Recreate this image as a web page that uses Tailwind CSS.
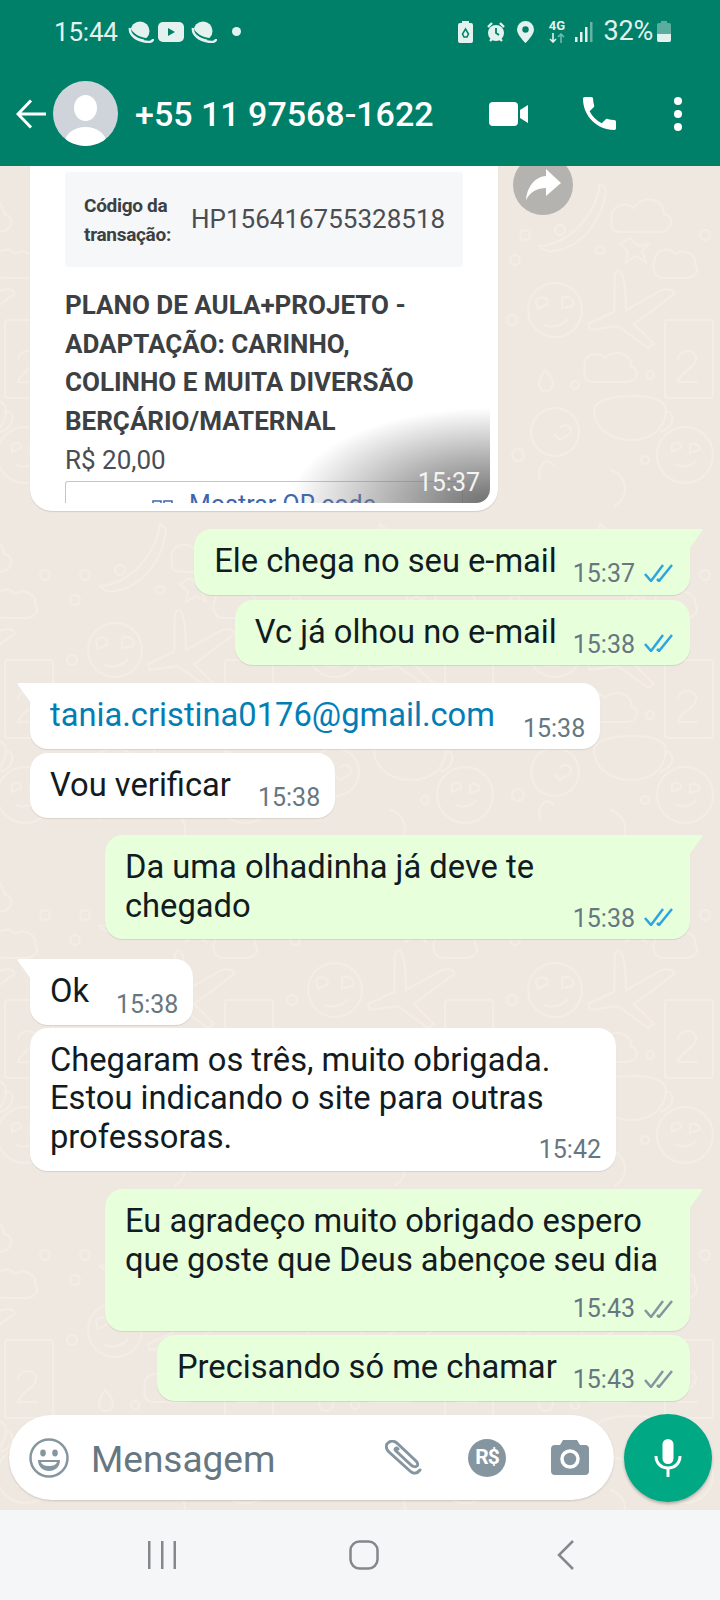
<!doctype html>
<html lang="pt-BR">
  <head>
    <meta charset="UTF-8" />
    <meta name="viewport" content="width=device-width, initial-scale=1.0" />
    <title>WhatsApp</title>
    <script src="https://cdn.jsdelivr.net/npm/@tailwindcss/browser@4"></script>
  </head>

  <body class="bg-white">
    <div class="flex h-[1600px] w-[720px] flex-col overflow-hidden font-['Roboto',sans-serif]">
      <!-- Header -->
      <header class="relative z-10 flex h-[166px] shrink-0 flex-col bg-[#008069] text-white">
        <!-- Status bar -->
        <div class="flex h-[62px] items-center pl-[54px] pr-[49px] pt-[1px] text-[#e3f2ee]">
          <span class="w-[68px] text-[26px] leading-none tracking-[-0.2px]">15:44</span>
          <svg class="ml-[6px] h-[22px] w-[26px]" viewBox="0 0 26 22"><circle cx="12" cy="10" r="9.500" fill="#e3f2ee"/><path d="M1 5c1 7 10 14 23 13" fill="none" stroke="#008069" stroke-width="2"/><path d="M2 7c-1 7 7 13 18 14 4 0 5-1 5-3" fill="none" stroke="#e3f2ee" stroke-width="2.500"/></svg>
          <svg class="ml-[4px] h-[20px] w-[26px]" viewBox="0 0 26 20"><rect width="26" height="20" rx="5" fill="#e3f2ee"/><path d="M10 6l7 4-7 4z" fill="#008069"/></svg>
          <svg class="ml-[7px] h-[22px] w-[26px]" viewBox="0 0 26 22"><circle cx="12" cy="10" r="9.500" fill="#e3f2ee"/><path d="M1 5c1 7 10 14 23 13" fill="none" stroke="#008069" stroke-width="2"/><path d="M2 7c-1 7 7 13 18 14 4 0 5-1 5-3" fill="none" stroke="#e3f2ee" stroke-width="2.500"/></svg>
          <span class="ml-[15px] h-[9px] w-[9px] rounded-full bg-[#e3f2ee]"></span>
          <span class="flex-1"></span>
          <svg class="h-[22px] w-[15px]" viewBox="0 0 15 22"><path d="M4 0h7v2h2a2 2 0 0 1 2 2v16a2 2 0 0 1-2 2H2a2 2 0 0 1-2-2V4a2 2 0 0 1 2-2h2z" fill="#e3f2ee"/><path d="M7.500 8l3 5-1.500 3H6l-1.500-3z" fill="none" stroke="#008069" stroke-width="1.500"/></svg>
          <svg class="ml-[13px] h-[24px] w-[20px]" viewBox="0 0 20 24"><circle cx="10" cy="13" r="8" fill="#e3f2ee"/><path d="M10 8v5l3 2" fill="none" stroke="#008069" stroke-width="1.800"/><path d="M2 7l4-4M18 7l-4-4M4 21l2-2M16 21l-2-2" stroke="#e3f2ee" stroke-width="2.400"/></svg>
          <svg class="ml-[11px] h-[22px] w-[17px]" viewBox="0 0 17 22"><path d="M8.500 0a8.500 8.500 0 0 1 8.500 8.500C17 14 8.500 22 8.500 22S0 14 0 8.500A8.500 8.500 0 0 1 8.500 0z" fill="#e3f2ee"/><circle cx="8.500" cy="8.500" r="3.200" fill="#008069"/></svg>
          <div class="ml-[14px] flex w-[17px] flex-col items-center">
            <span class="text-[13px] font-bold leading-[12px]">4G</span>
            <svg class="mt-[1px] h-[10px] w-[16px]" viewBox="0 0 16 10" fill="none" stroke-width="1.600"><path d="M4 0v9M1 6l3 3 3-3" stroke="#e3f2ee"/><path d="M12 10V1M9 4l3-3 3 3" stroke="#e3f2ee" stroke-opacity="0.5"/></svg>
          </div>
          <svg class="ml-[10px] h-[20px] w-[18px]" viewBox="0 0 18 20" fill="#e3f2ee"><rect x="0" y="15" width="2.500" height="5"/><rect x="5" y="10" width="2.500" height="10"/><rect x="10" y="5" width="2.500" height="15"/><rect x="15" y="0" width="2.500" height="20" opacity="0.45"/></svg>
          <span class="ml-[10px] text-[27px] leading-none tracking-[-0.2px]">32%</span>
          <svg class="ml-[4px] h-[21px] w-[14px]" viewBox="0 0 14 21"><path d="M4 0h6v2h2a2 2 0 0 1 2 2v15a2 2 0 0 1-2 2H2a2 2 0 0 1-2-2V4a2 2 0 0 1 2-2h2z" fill="#e3f2ee" opacity="0.4"/><path d="M0 13h14v6a2 2 0 0 1-2 2H2a2 2 0 0 1-2-2z" fill="#e3f2ee"/></svg>
        </div>
        <!-- Contact row -->
        <div class="mt-[19px] flex h-[65px] items-center pl-[16px]">
          <svg class="h-[30px] w-[30px]" viewBox="0 0 30 30" fill="none" stroke="#fff" stroke-width="3"><path d="M30 15H2M15 1.500L2 15l13 13.500"/></svg>
          <svg class="ml-[7px] h-[65px] w-[65px]" viewBox="0 0 65 65"><defs><clipPath id="av"><circle cx="32.500" cy="32.500" r="32.500"/></clipPath></defs><circle cx="32.500" cy="32.500" r="32.500" fill="#cfd4da"/><g clip-path="url(#av)" fill="#fff"><ellipse cx="32.500" cy="27" rx="11.500" ry="13"/><ellipse cx="32.500" cy="62" rx="21" ry="16"/></g></svg>
          <span class="ml-[17px] text-[34px] font-medium leading-none">+55 11 97568-1622</span>
          <span class="flex-1"></span>
          <svg class="h-[24px] w-[39px]" viewBox="0 0 39 24" fill="#fff"><rect width="29" height="24" rx="4"/><path d="M31 8l8-5v18l-8-5z"/></svg>
          <svg class="ml-[55px] h-[33px] w-[33px]" viewBox="3 3 18 18" fill="#fff"><path d="M6.620 10.790c1.440 2.830 3.760 5.140 6.590 6.590l2.200-2.200c.27-.27.670-.36 1.020-.24 1.120.37 2.330.57 3.570.57.55 0 1 .45 1 1V20c0 .55-.45 1-1 1-9.390 0-17-7.610-17-17 0-.55.45-1 1-1h3.500c.55 0 1 .45 1 1 0 1.250.2 2.450.57 3.570.11.35.03.74-.25 1.020l-2.200 2.200z"/></svg>
          <div class="ml-[58px] mr-[38px] flex flex-col gap-[5px]">
            <span class="h-[8px] w-[8px] rounded-full bg-white"></span>
            <span class="h-[8px] w-[8px] rounded-full bg-white"></span>
            <span class="h-[8px] w-[8px] rounded-full bg-white"></span>
          </div>
        </div>
      </header>

      <!-- Chat -->
      <main class="relative flex h-[1344px] flex-col overflow-hidden bg-[#efe8e0]">
        <!-- Wallpaper doodles -->
        <svg class="absolute inset-0 h-full w-full" xmlns="http://www.w3.org/2000/svg">
          <defs>
            <pattern id="doodle" x="500" y="4" width="220" height="340" patternUnits="userSpaceOnUse">
              <g fill="none" stroke="#f3ede6" stroke-width="2">
                <path d="M112 52c-4-16 14-22 22-14 8-14 30-10 30 6 12 2 8 18-4 18h-38c-8 0-12-4-10-10z"/>
                <path d="M100 14c-4 30-30 60-60 62 2 4 8 6 14 5 30-4 50-34 52-62z"/>
                <path d="M130 68l8 8 10-2-6 8 4 10-10-6-10 6 2-10-8-8z"/>
                <path d="M155 90c0-10 14-14 20-6 8-6 22 0 20 10 6 8-2 14-10 14h-22c-8 0-12-10-8-18z"/>
                <circle cx="55" cy="140" r="27"/><path d="M36 130c4-5 12-3 12 4l-10 5zM62 128c6-3 14 1 11 8l-11 2zM44 155c8 3 18 1 24-6"/>
                <path d="M118 100c6 0 8 20 8 40l36-20c6-2 14 0 12 4l-40 30 20 20-6 4-30-22-28 4-2-6 26-12c2-20-2-40 4-42z"/>
                <rect x="165" y="150" width="48" height="78" rx="3"/><path d="M178 190c0-12 20-12 18 0-1 8-16 12-18 22h20"/>
                <path d="M85 198c-4-14 14-18 20-10 10-10 28-4 26 8 10 4 6 16-4 16h-34c-8 0-10-8-8-14z"/>
                <path d="M45 200c6 6 8 10 8 14a7 7 0 0 1-14 0c0-4 2-8 6-14z"/>
                <path d="M94 240c0-10 20-14 40-14s34 6 32 16c-2 16-14 28-34 28-24 0-38-14-38-30z"/><path d="M164 242c10-4 14 14-4 20"/>
                <circle cx="55" cy="262" r="24"/><path d="M60 258c4-6 14-2 10 6l-10 6-6-6"/>
                <circle cx="185" cy="285" r="28"/><path d="M172 275c4-4 10-2 9 3l-9 4zM190 275c4-3 11 0 9 5l-9 3zM176 295c8 3 16 1 20-5"/>
                <path d="M40 310c-4-16 8-24 14-14M110 300c16 4 22 26 4 36"/>
                <circle cx="15" cy="90" r="5"/><circle cx="25" cy="65" r="5"/><circle cx="60" cy="60" r="5"/><circle cx="100" cy="80" r="4"/><circle cx="205" cy="65" r="5"/>
                <circle cx="12" cy="150" r="5"/><circle cx="75" cy="215" r="4"/><circle cx="150" cy="205" r="4"/><circle cx="18" cy="285" r="6"/><circle cx="145" cy="290" r="4"/>
              </g>
            </pattern>
          </defs>
          <rect width="100%" height="100%" fill="url(#doodle)"/>
        </svg>

        <div class="relative flex flex-1 flex-col text-[32.7px] leading-[38.5px] text-[#111b21]">
          <!-- Product card -->
          <div class="flex items-start pl-[30px]">
            <div class="h-[345px] w-[468px] rounded-b-[22px] bg-white px-[8px] pb-[8px] pt-[6px] shadow-[0_1px_1px_rgba(0,0,0,0.12)]">
              <div class="relative h-[331px] overflow-hidden rounded-b-[14px] pl-[27px] pr-[27px]">
                <div class="flex h-[95px] items-center rounded-[3px] bg-[#f6f7f9] pl-[19px]">
                  <div class="w-[107px] text-[19px] font-bold leading-[29px] tracking-[-0.3px] text-[#3c4043]">Código da<br />transação:</div>
                  <span class="-mt-[2px] text-[26px] leading-none text-[#4a4d52]">HP156416755328518</span>
                </div>
                <div class="mt-[19px] whitespace-nowrap text-[26px] font-bold leading-[38.7px] text-[#3c4043]">PLANO DE AULA+PROJETO -<br />ADAPTAÇÃO: CARINHO,<br />COLINHO E MUITA DIVERSÃO<br />BERÇÁRIO/MATERNAL</div>
                <div class="text-[26px] leading-[38px] text-[#4a4d52]">R$ 20,00</div>
                <div class="mt-[2px] flex h-[40px] items-start justify-center gap-[16px] rounded-t-[3px] border border-b-0 border-[#b9c6dd] pt-[8px] text-[25px] leading-[30px] text-[#3f66ad]">
                  <svg class="mt-[7px] h-[20px] w-[21px]" viewBox="0 0 21 20" fill="none" stroke="#3f66ad" stroke-width="1.500"><rect x="1" y="4" width="8" height="8"/><rect x="12" y="4" width="8" height="8"/><rect x="1" y="14" width="8" height="6"/><rect x="12" y="14" width="8" height="6"/></svg>
                  <span>Mostrar QR code</span>
                </div>
                <div class="absolute inset-0 bg-[radial-gradient(ellipse_200px_95px_at_100%_100%,rgba(95,95,95,0.9),rgba(130,130,130,0.6)_50%,rgba(255,255,255,0)_100%)]"></div>
                <span class="absolute bottom-[4px] right-[10px] text-[25px] leading-[32px] text-[#f4f4f4]">15:37</span>
              </div>
            </div>
            <div class="ml-[15px] -mt-[11px] flex h-[60px] w-[60px] items-center justify-center rounded-full bg-[#b4b3af]">
              <svg class="h-[36px] w-[38px]" viewBox="0 0 38 36" fill="#fff"><path d="M22 2l15 14-15 13v-8C13 21 6 25 2 33 3 21 10 10 22 9z"/></svg>
            </div>
          </div>

          <!-- Messages -->
          <div class="relative mt-[18px] flex flex-col items-end gap-[5px] pr-[30px]">
            <div class="relative flex items-end gap-[16px] rounded-[18px] rounded-tr-none bg-[#e7ffdb] pb-[4px] pl-[20px] pr-[17px] pt-[13px] shadow-[0_1px_1px_rgba(0,0,0,0.1)]">
              <svg class="absolute -right-[13px] top-0 h-[20px] w-[14px]" viewBox="0 0 14 20" fill="#e7ffdb"><path d="M0 0h12c1.500 0 2 1 1 2L0 20z"/></svg>
              <span class="pb-[10px]">Ele chega no seu e-mail</span>
              <span class="flex h-[32px] items-center gap-[9px] text-[25px] text-[#667781]">15:37
                <svg class="-mt-[4px] h-[18px] w-[29px]" viewBox="0 0 29 18" fill="none" stroke="#2ba6e2" stroke-width="2.500"><path d="M1 10l6 7L19 1M13 15l2 2L28 1"/></svg>
              </span>
            </div>
            <div class="flex items-end gap-[16px] rounded-[18px] bg-[#e7ffdb] pb-[4px] pl-[20px] pr-[17px] pt-[13px] shadow-[0_1px_1px_rgba(0,0,0,0.1)]">
              <span class="pb-[10px]">Vc já olhou no e-mail</span>
              <span class="flex h-[32px] items-center gap-[9px] text-[25px] text-[#667781]">15:38
                <svg class="-mt-[4px] h-[18px] w-[29px]" viewBox="0 0 29 18" fill="none" stroke="#2ba6e2" stroke-width="2.500"><path d="M1 10l6 7L19 1M13 15l2 2L28 1"/></svg>
              </span>
            </div>
          </div>

          <div class="relative mt-[18px] flex flex-col items-start gap-[4px] pl-[30px]">
            <div class="relative flex items-end gap-[28px] rounded-[18px] rounded-tl-none bg-white pb-[4px] pl-[20px] pr-[15px] pt-[13px] shadow-[0_1px_1px_rgba(0,0,0,0.1)]">
              <svg class="absolute -left-[13px] top-0 h-[20px] w-[14px]" viewBox="0 0 14 20" fill="#fff"><path d="M14 0H2C.5 0 0 1 1 2l13 18z"/></svg>
              <span class="pb-[10px] text-[#027eb5]">tania.cristina0176@gmail.com</span>
              <span class="h-[32px] text-[25px] leading-[32px] text-[#667781]">15:38</span>
            </div>
            <div class="flex items-end gap-[27px] rounded-[18px] bg-white pb-[4px] pl-[20px] pr-[15px] pt-[13px] shadow-[0_1px_1px_rgba(0,0,0,0.1)]">
              <span class="pb-[10px]">Vou verificar</span>
              <span class="h-[32px] text-[25px] leading-[32px] text-[#667781]">15:38</span>
            </div>
          </div>

          <div class="relative mt-[17px] flex flex-col items-end pr-[30px]">
            <div class="relative flex w-[585px] flex-col rounded-[18px] rounded-tr-none bg-[#e7ffdb] pb-[4px] pl-[20px] pr-[17px] pt-[13px] shadow-[0_1px_1px_rgba(0,0,0,0.1)]">
              <svg class="absolute -right-[13px] top-0 h-[20px] w-[14px]" viewBox="0 0 14 20" fill="#e7ffdb"><path d="M0 0h12c1.500 0 2 1 1 2L0 20z"/></svg>
              <span class="pb-[10px]">Da uma olhadinha já deve te<br />chegado</span>
              <span class="-mt-[32px] flex h-[32px] items-center gap-[9px] self-end text-[25px] text-[#667781]">15:38
                <svg class="-mt-[4px] h-[18px] w-[29px]" viewBox="0 0 29 18" fill="none" stroke="#2ba6e2" stroke-width="2.500"><path d="M1 10l6 7L19 1M13 15l2 2L28 1"/></svg>
              </span>
            </div>
          </div>

          <div class="relative mt-[20px] flex flex-col items-start gap-[3px] pl-[30px]">
            <div class="relative flex items-end gap-[27px] rounded-[18px] rounded-tl-none bg-white pb-[4px] pl-[20px] pr-[15px] pt-[13px] shadow-[0_1px_1px_rgba(0,0,0,0.1)]">
              <svg class="absolute -left-[13px] top-0 h-[20px] w-[14px]" viewBox="0 0 14 20" fill="#fff"><path d="M14 0H2C.5 0 0 1 1 2l13 18z"/></svg>
              <span class="pb-[10px]">Ok</span>
              <span class="h-[32px] text-[25px] leading-[32px] text-[#667781]">15:38</span>
            </div>
            <div class="flex w-[586px] flex-col rounded-[18px] bg-white pb-[5px] pl-[20px] pr-[15px] pt-[13px] shadow-[0_1px_1px_rgba(0,0,0,0.1)]">
              <span class="pb-[10px]">Chegaram os três, muito obrigada.<br />Estou indicando o site para outras<br />professoras.</span>
              <span class="-mt-[32px] h-[32px] self-end text-[25px] leading-[32px] text-[#667781]">15:42</span>
            </div>
          </div>

          <div class="relative mt-[18px] flex flex-col items-end gap-[4px] pr-[30px]">
            <div class="relative flex w-[585px] flex-col rounded-[18px] rounded-tr-none bg-[#e7ffdb] pb-[6px] pl-[20px] pr-[17px] pt-[13px] shadow-[0_1px_1px_rgba(0,0,0,0.1)]">
              <svg class="absolute -right-[13px] top-0 h-[20px] w-[14px]" viewBox="0 0 14 20" fill="#e7ffdb"><path d="M0 0h12c1.500 0 2 1 1 2L0 20z"/></svg>
              <span class="whitespace-nowrap pb-[14px]">Eu agradeço muito obrigado espero<br />que goste que Deus abençoe seu dia</span>
              <span class="flex h-[32px] items-center gap-[9px] self-end text-[25px] text-[#667781]">15:43
                <svg class="h-[18px] w-[29px]" viewBox="0 0 29 18" fill="none" stroke="#8696a0" stroke-width="2.500"><path d="M1 10l6 7L19 1M13 15l2 2L28 1"/></svg>
              </span>
            </div>
            <div class="flex items-end gap-[16px] rounded-[18px] bg-[#e7ffdb] pb-[4px] pl-[20px] pr-[17px] pt-[13px] shadow-[0_1px_1px_rgba(0,0,0,0.1)]">
              <span class="pb-[10px]">Precisando só me chamar</span>
              <span class="flex h-[32px] items-center gap-[9px] text-[25px] text-[#667781]">15:43
                <svg class="-mt-[4px] h-[18px] w-[29px]" viewBox="0 0 29 18" fill="none" stroke="#8696a0" stroke-width="2.500"><path d="M1 10l6 7L19 1M13 15l2 2L28 1"/></svg>
              </span>
            </div>
          </div>
        </div>

        <!-- Composer -->
        <div class="relative flex h-[96px] items-start pl-[9px]">
          <div class="mt-[1px] flex h-[85px] w-[605px] items-center rounded-full bg-white pl-[20px] shadow-[0_1px_2px_rgba(0,0,0,0.15)]">
            <svg class="h-[40px] w-[40px]" viewBox="0 0 40 40"><circle cx="20" cy="20" r="18.500" fill="none" stroke="#8696a0" stroke-width="2.500"/><ellipse cx="14" cy="15" rx="2.800" ry="3.400" fill="#8696a0"/><ellipse cx="26" cy="15" rx="2.800" ry="3.400" fill="#8696a0"/><path d="M9 22h22c0 7-5 11-11 11S9 29 9 22z" fill="#8696a0"/><path d="M12 24h16c-1 3-4 4-8 4s-7-1-8-4z" fill="#fff"/></svg>
            <span class="ml-[22px] mt-[3px] text-[37px] leading-none text-[#667781]">Mensagem</span>
            <span class="flex-1"></span>
            <svg class="h-[36px] w-[40px]" viewBox="0 0 40 36" fill="none" stroke="#8696a0" stroke-width="3" stroke-linecap="round"><path d="M35 30c-3 4-7 4-10 1L4 12C0 8 1 4 3 3c3-3 7-2 10 1l18 17c2 2 2 4 1 5s-4 1-6-1L11 11c-2-2 0-4 2-2"/></svg>
            <div class="ml-[43px] flex h-[38px] w-[38px] items-center justify-center rounded-full bg-[#8696a0] text-[21px] font-bold tracking-[-1px] text-white">R$</div>
            <svg class="ml-[45px] mr-[25px] h-[35px] w-[38px]" viewBox="0 0 38 35"><path d="M12 0h14l3 5h5a4 4 0 0 1 4 4v22a4 4 0 0 1-4 4H4a4 4 0 0 1-4-4V9a4 4 0 0 1 4-4h5z" fill="#8696a0"/><circle cx="19" cy="19" r="8" fill="none" stroke="#fff" stroke-width="3.500"/></svg>
          </div>
          <div class="ml-[10px] flex h-[88px] w-[88px] items-center justify-center rounded-full bg-[#00a884] shadow-[0_2px_3px_rgba(0,0,0,0.25)]">
            <svg class="h-[38px] w-[28px]" viewBox="0 0 28 38"><rect x="8.500" y="0" width="11" height="25" rx="5.500" fill="#fff"/><path d="M2 17c0 7 5 12 12 12s12-5 12-12M14 29v9" fill="none" stroke="#fff" stroke-width="3"/></svg>
          </div>
        </div>
      </main>

      <!-- Nav bar -->
      <nav class="flex h-[90px] items-center bg-[#f5f6f8] pl-[148px]">
        <svg class="h-[30px] w-[28px]" viewBox="0 0 28 30" fill="#85878a"><rect x="0" y="1" width="2.500" height="28"/><rect x="13" y="1" width="2.500" height="28"/><rect x="25.500" y="1" width="2.500" height="28"/></svg>
        <svg class="ml-[173px] h-[30px] w-[30px]" viewBox="0 0 30 30" fill="none" stroke="#85878a" stroke-width="2.500"><rect x="1.500" y="1.500" width="27" height="27" rx="9"/></svg>
        <svg class="ml-[178px] h-[30px] w-[18px]" viewBox="0 0 18 30" fill="none" stroke="#85878a" stroke-width="2.500"><path d="M16 1L2 15l14 14"/></svg>
      </nav>
    </div>
  </body>
</html>
